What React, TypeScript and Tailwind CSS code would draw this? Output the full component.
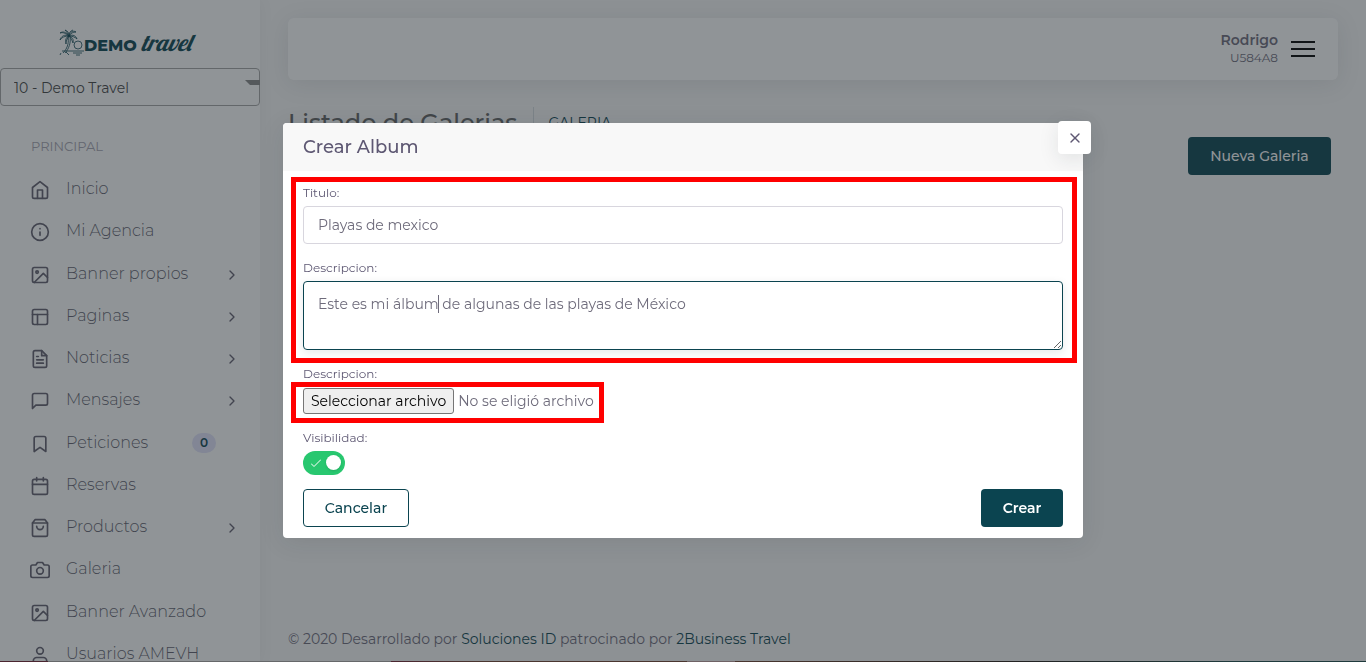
import { useState } from 'react'
import type { IconType } from 'react-icons'
import {
  FiBookmark, FiCalendar, FiCamera, FiChevronRight, FiFileText, FiHome, FiImage,
  FiInfo, FiLayout, FiMessageSquare, FiShoppingBag, FiUser, FiX,
} from 'react-icons/fi'

type MenuItem = {
  label: string
  icon: IconType
  children?: boolean
  badge?: string
}

const MENU: MenuItem[] = [
  { label: 'Inicio', icon: FiHome },
  { label: 'Mi Agencia', icon: FiInfo },
  { label: 'Banner propios', icon: FiImage, children: true },
  { label: 'Paginas', icon: FiLayout, children: true },
  { label: 'Noticias', icon: FiFileText, children: true },
  { label: 'Mensajes', icon: FiMessageSquare, children: true },
  { label: 'Peticiones', icon: FiBookmark, badge: '0' },
  { label: 'Reservas', icon: FiCalendar },
  { label: 'Productos', icon: FiShoppingBag, children: true },
  { label: 'Galeria', icon: FiCamera },
  { label: 'Banner Avanzado', icon: FiImage },
  { label: 'Usuarios AMEVH', icon: FiUser },
]

function Logo() {
  return (
    <svg width="140" height="30" viewBox="0 0 140 30" fill="none" stroke="#0b4450" role="img" aria-label="Demo Travel">
      <g strokeWidth="0.8">
        <path d="M10 8c1 6 0 12-5 17M12 9c1 5-1 12-5 16M11 8C8 4 5 3 2 5c3-1 5 0 9 3M11 8C7 6 3 8 2 12c2-3 5-4 9-4M11 8c-3 1-4 4-3 8 0-3 1-5 3-8M11 8c1-4 4-6 7-4-3 0-5 1-7 4M11 8c4-2 7 0 8 3-2-2-5-3-8-3M11 8c3 1 5 3 4 7-1-3-2-5-4-7M11 8c0-3-1-5-4-6 2 2 3 4 4 6M11 8c0-3 1-5 4-6" />
        <circle cx="20" cy="17" r="4" />
        <path d="M4 23h22M15 25h9M18 27h4M3 25l-1 2M8 24l3 3" />
      </g>
      <text x="26" y="23" fill="#0b4450" stroke="none" fontFamily="Montserrat, Inter, sans-serif" fontWeight="800" fontSize="16">DEMO</text>
      <text x="83" y="23" fill="#0b4450" stroke="none" fontFamily="Lobster, Pacifico, 'Open Sans', sans-serif" fontStyle="italic" fontSize="23">travel</text>
    </svg>
  )
}

function Sidebar() {
  return (
    <aside className="w-[260px] shrink-0 h-screen overflow-hidden bg-white shadow-[0_0_15px_0_rgba(34,41,47,0.05)]">
      <div className="flex justify-center pt-7 pb-2.5 pr-1">
        <Logo />
      </div>
      <div className="relative">
        <select aria-label="Agencia" className="block w-full h-[38px] appearance-none rounded border border-[#a5a5a5] bg-white pt-0.5 px-[13px] text-sm text-[#444444]">
          <option>10 - Demo Travel</option>
        </select>
        <svg className="absolute right-0 top-3 pointer-events-none" width="15" height="5" viewBox="0 0 15 5" fill="#888888">
          <path d="M0 0h15v5H5z" />
        </svg>
      </div>
      <h6 className="mt-[31px] mb-[13px] pl-[31px] text-[13px] leading-[18px] text-[#a6a4b0]">PRINCIPAL</h6>
      <ul className="grid grid-rows-12 h-[507px]">
        {MENU.map(({ label, icon: Icon, children, badge }) => (
          <li key={label} className="flex">
            <a href="#" className="flex flex-1 items-center pl-[30px] pr-5 text-[#625f6e]">
              <Icon className="w-5 h-5 mt-0.5 mr-4" />
              <span className="flex-1 text-base leading-4 font-light">{label}</span>
              {badge && (
                <span className="mr-6 rounded-full bg-[#e2e3fa] px-2 py-0.5 text-xs font-semibold text-[#0b4450]">{badge}</span>
              )}
              {children && <FiChevronRight className="w-4 h-4 mt-0.5" />}
            </a>
          </li>
        ))}
      </ul>
    </aside>
  )
}

function Topbar() {
  return (
    <header className="flex h-[62px] items-center justify-end rounded-md bg-white pr-[23px] shadow-[0_4px_24px_0_rgba(34,41,47,0.1)]">
      <div className="mr-[13px] text-right text-[#6e6b7b]">
        <p className="text-sm leading-[18px] font-semibold">Rodrigo</p>
        <p className="text-xs leading-[18px]">U584A8</p>
      </div>
      <button aria-label="Menu" className="flex flex-col gap-[5px]">
        <span className="h-0.5 w-6 bg-black" />
        <span className="h-0.5 w-6 bg-black" />
        <span className="h-0.5 w-6 bg-black" />
      </button>
    </header>
  )
}

function AlbumModal() {
  const [title, setTitle] = useState('Playas de mexico')
  const [description, setDescription] = useState('Este es mi álbum de algunas de las playas de México')
  const [visible, setVisible] = useState(true)

  return (
    <div className="fixed inset-0 flex items-center justify-center bg-[#22292f]/50 pb-px">
      <div role="dialog" aria-labelledby="modal-title" className="relative w-[800px] rounded bg-white text-[#6e6b7b] shadow-[0_4px_24px_0_rgba(34,41,47,0.1)]">
        <div className="flex h-12 items-center rounded-t bg-[#f8f8f8] px-5">
          <h5 id="modal-title" className="text-lg font-medium text-[#5e5873]">Crear Album</h5>
          <button aria-label="Cerrar" className="absolute -right-2 -top-0.5 flex h-[33px] w-[33px] items-center justify-center rounded bg-white text-[#5e5873] shadow-[0_5px_20px_0_rgba(34,41,47,0.1)]">
            <FiX className="h-4 w-4" />
          </button>
        </div>

        <form className="px-5 pt-[13px] pb-[11px]" onSubmit={e => e.preventDefault()}>
          <label htmlFor="title" className="mb-1 block text-xs leading-[18px] text-[#5e5873]">Titulo:</label>
          <input id="title" value={title} onChange={e => setTitle(e.target.value)}
            className="block h-[38px] w-full rounded border border-[#d8d6de] px-3.5 text-sm outline-none" />

          <label htmlFor="description" className="mt-[15px] mb-1 block text-xs leading-[18px] text-[#5e5873]">Descripcion:</label>
          <div className="relative">
            <textarea id="description" value={description} onChange={e => setDescription(e.target.value)}
              className="block h-[69px] w-full rounded border border-[#0b4450] px-3.5 py-3 text-sm leading-5 shadow-[0_3px_10px_0_rgba(34,41,47,0.1)] outline-none" />
            <span className="absolute left-[135px] top-3.5 h-[18px] w-px bg-[#6e6b7b]" />
          </div>

          <label htmlFor="file" className="mt-[15px] mb-[5px] block text-xs leading-[18px] text-[#5e5873]">Descripcion:</label>
          <div className="flex h-[26px] items-center gap-1 text-sm">
            <input id="file" type="file" className="sr-only" />
            <button type="button" onClick={() => document.getElementById('file')?.click()}
              className="h-[26px] rounded-[3px] border border-[#767676] bg-[#efefef] px-[7px] text-black">Seleccionar archivo</button>
            <span>No se eligió archivo</span>
          </div>

          <label htmlFor="visible" className="mt-[15px] mb-1 block text-xs leading-[18px] text-[#5e5873]">Visibilidad:</label>
          <div className="relative h-6 w-[42px]">
            <input id="visible" type="checkbox" checked={visible} onChange={e => setVisible(e.target.checked)}
              className="block h-6 w-[42px] appearance-none rounded-full bg-[#e2e2e2] checked:bg-[#28c76f]" />
            <svg className="absolute left-2 top-[7px] pointer-events-none" width="10" height="10" viewBox="0 0 10 10" fill="none" stroke="white">
              <path d="M0 5.5l3 3L10 1.5" />
            </svg>
            <span className="absolute right-1 top-1 h-[15px] w-[15px] rounded-full bg-white shadow pointer-events-none" />
          </div>

          <div className="mt-3.5 flex justify-between text-sm">
            <button type="button" className="h-[38px] w-[106px] rounded border border-[#0b4450] font-medium text-[#0b4450]">Cancelar</button>
            <button type="submit" className="h-[38px] w-[82px] rounded bg-[#0b4450] font-semibold text-white">Crear</button>
          </div>
        </form>

        {/* marcas de la guia */}
        <div className="pointer-events-none absolute left-2 right-1.5 top-[54px] h-[186px] border-[5px] border-[#ff0000]" />
        <div className="pointer-events-none absolute left-2 top-[259px] h-[41px] w-[313px] border-[5px] border-[#ff0000]" />
      </div>
    </div>
  )
}

export default function App() {
  return (
    <div className="flex h-screen overflow-hidden bg-[#f8f8f8] font-[Montserrat,Inter,'Noto_Sans',sans-serif]">
      <Sidebar />
      <main className="flex flex-1 flex-col pl-7 pr-7 pt-[18px]">
        <Topbar />
        <div className="mt-[27px] flex items-start justify-between pr-[7px]">
          <div className="flex items-center">
            <h2 className="border-r border-[#d6dce1] pr-4 text-2xl leading-8 font-medium text-[#636363]">Listado de Galerias</h2>
            <a href="#" className="pl-3.5 text-sm text-[#0b4450]">GALERIA</a>
          </div>
          <button className="mt-[30px] h-[38px] w-[143px] rounded bg-[#0b4450] text-sm font-medium text-white">Nueva Galeria</button>
        </div>
        <footer className="mt-auto pb-3 text-sm leading-[22px] text-[#6e6b7b]">
          © 2020 Desarrollado por <a href="#" className="text-[#0b4450]">Soluciones ID</a> patrocinado por <a href="#" className="text-[#0b4450]">2Business Travel</a>
        </footer>
      </main>
      <AlbumModal />
      <div className="fixed inset-x-0 bottom-0 h-px bg-[linear-gradient(90deg,#4a2530_0_48px,#66686a_48px_391px,#4a2530_391px,#4a362f_480px_687px,#6f6265_687px_735px,#4a362f_735px,#222222_75%,#1f3a3c_90%)]" />
    </div>
  )
}
